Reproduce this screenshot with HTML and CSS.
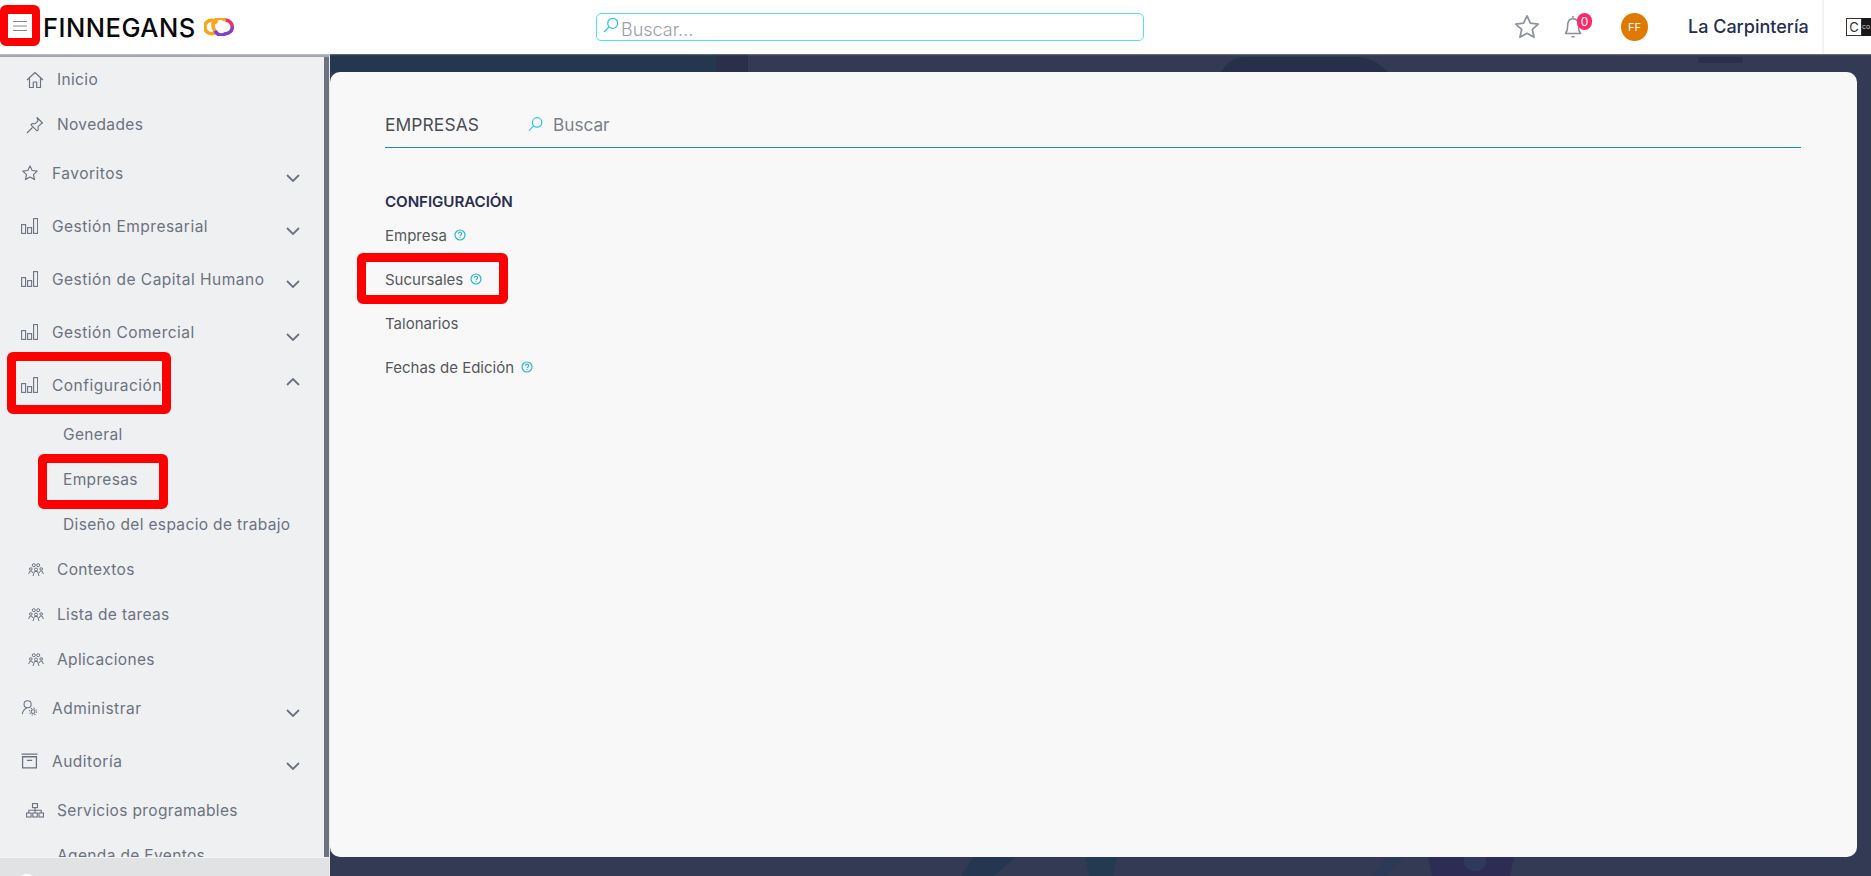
FILE: index.html
```html
<!DOCTYPE html>
<html lang="es">
<head>
<meta charset="utf-8">
<title>Finnegans</title>
<link rel="stylesheet" href="styles.css">
</head>
<body>
<svg width="0" height="0" class="defs">
  <defs>
    <symbol id="bars" viewBox="0 0 17 16"><g fill="none" stroke="currentColor" stroke-width="1.1"><rect x=".6" y="6.6" width="4" height="8.8"/><rect x="6.6" y="9.6" width="4" height="5.8"/><rect x="12.6" y=".6" width="4" height="14.8"/></g></symbol>
    <symbol id="chev" viewBox="0 0 14 8"><path d="M1 1l6 6 6-6" fill="none" stroke="currentColor" stroke-width="1.8"/></symbol>
    <symbol id="star" viewBox="0 0 24 24"><path d="M12 2.5l2.9 6.2 6.7.8-5 4.6 1.4 6.7L12 17.400l-6 3.400 1.400-6.700-5-4.600 6.700-.8z" fill="none" stroke="currentColor" stroke-width="1.500" stroke-linejoin="round"/></symbol>
    <symbol id="people" viewBox="0 0 16 14"><g fill="none" stroke="currentColor" stroke-width="1"><circle cx="5.800" cy="2.200" r="1.500"/><circle cx="10.200" cy="2.200" r="1.500"/><circle cx="2.800" cy="6" r="1.300"/><circle cx="8" cy="6.500" r="1.500"/><circle cx="13.200" cy="6" r="1.300"/><path d="M.6 11l1.400-3h1.600l1 2M5 13l1.400-4.500h3.200L11 13M11 10l1.400-2H14l1.400 3"/></g></symbol>
    <symbol id="help" viewBox="0 0 12 12"><circle cx="6" cy="6" r="5" fill="none" stroke="currentColor" stroke-width="1.200"/><path d="M4.400 4.800a1.600 1.600 0 1 1 2.500 1.300c-.6.300-.9.500-.9 1.100" fill="none" stroke="currentColor" stroke-width="1.100"/><circle cx="6" cy="8.600" r=".7" fill="currentColor"/></symbol>
    <symbol id="search" viewBox="0 0 16 16"><circle cx="9.700" cy="6.300" r="5" fill="none" stroke="currentColor" stroke-width="1.300"/><path d="M6 10L1 15" stroke="currentColor" stroke-width="1.300"/></symbol>
  </defs>
</svg>

<header class="topbar">
  <div class="brand">
    <span class="menu-btn">
      <svg class="burger" viewBox="0 0 14 10"><path d="M0 .5h14M0 5h14M0 9.500h14" stroke="currentColor" stroke-width=".9"/></svg>
    </span>
    <span class="wordmark">FINNEGANS</span>
    <svg class="co-logo" viewBox="0 0 30 18">
      <path d="M13 5.200A6.700 6.700 0 1 0 13 12.800" fill="none" stroke="#f9a51a" stroke-width="3.600"/>
      <path d="M11 12.500A6.700 6.700 0 0 0 21.500 15.700A6.700 6.700 0 0 0 28.300 9" fill="none" stroke="#8140c9" stroke-width="3.600"/>
      <path d="M11 12.500A6.700 6.700 0 0 1 21.500 2.300" fill="none" stroke="#f9a51a" stroke-width="3.600"/>
      <path d="M21.500 2.300A6.700 6.700 0 0 1 28.300 9" fill="none" stroke="#ee2f6a" stroke-width="3.600"/>
    </svg>
  </div>
  <div class="top-search">
    <svg class="top-search-icon"><use href="#search"/></svg>
    <span class="top-search-text">Buscar...</span>
  </div>
  <div class="top-actions">
    <svg class="top-star"><use href="#star"/></svg>
    <span class="bell-wrap">
      <svg class="bell" viewBox="2 1 16 22"><path d="M3 18c1.500-1.500 2-3 2-6.500C5 7 7 4.500 10 4.500s5 2.500 5 7c0 3.500.5 5 2 6.500zM8.500 21h3M10 2v2.500" fill="none" stroke="currentColor" stroke-width="1.400" stroke-linejoin="round"/></svg>
      <span class="badge">0</span>
    </span>
    <span class="avatar">FF</span>
    <span class="company">La Carpintería</span>
    <span class="co-box"><span class="co-box-mark">C</span><span class="co-box-dark">co</span></span>
  </div>
</header>

<div class="workspace">
  <svg class="backdrop" viewBox="0 0 1541 822" preserveAspectRatio="none">
    <rect x="0" y="0" width="386" height="18" fill="#25364f"/>
    <rect x="386" y="0" width="32" height="18" fill="#2a3049"/>
    <path d="M891 18q8-15 25-15h110q17 0 32 15z" fill="#27304a"/>
    <rect x="1368" y="3" width="45" height="6" rx="2" fill="#2a3049"/>
    <path d="M643 803h43l-22 19h-33z" fill="#253750"/>
    <path d="M755 803h32l-4 19h-24z" fill="#243a50"/>
    <path d="M1057 803h16l-16 19h-15z" fill="#2c3a56"/>
    <path d="M1098 803h86l-4 19h-78z" fill="#2c2c55"/>
    <path d="M1134 803h22v6a11 8 0 0 1-22 0z" fill="#2d3a5c"/>
  </svg>
  <nav class="sidebar">
    <div class="side-scroll">
      <a class="item leaf">
        <svg class="leaf-icon" viewBox="0 0 18 18"><path d="M1 9l8-7.500L17 9M3.500 7.500V16.500h3.800v-5.500h3.400v5.500h3.800V7.500" fill="none" stroke="currentColor" stroke-width="1.200" stroke-linejoin="round"/></svg>
        <span>Inicio</span>
      </a>
      <a class="item leaf">
        <svg class="leaf-icon" viewBox="0 0 18 18"><path d="M11 1.500l5.500 5.500-1.500.8-3 3 .2 3-1.200 1-6-6 1-1.200 3 .2 3-3zM6.500 11.500L1 17" fill="none" stroke="currentColor" stroke-width="1.100" stroke-linejoin="round"/></svg>
        <span>Novedades</span>
      </a>
      <a class="item group">
        <svg class="group-icon star-icon"><use href="#star"/></svg>
        <span class="group-label">Favoritos</span>
        <svg class="chev"><use href="#chev"/></svg>
      </a>
      <a class="item group">
        <svg class="group-icon"><use href="#bars"/></svg>
        <span class="group-label">Gestión Empresarial</span>
        <svg class="chev"><use href="#chev"/></svg>
      </a>
      <a class="item group">
        <svg class="group-icon"><use href="#bars"/></svg>
        <span class="group-label">Gestión de Capital Humano</span>
        <svg class="chev"><use href="#chev"/></svg>
      </a>
      <a class="item group">
        <svg class="group-icon"><use href="#bars"/></svg>
        <span class="group-label">Gestión Comercial</span>
        <svg class="chev"><use href="#chev"/></svg>
      </a>
      <a class="item group">
        <svg class="group-icon"><use href="#bars"/></svg>
        <span class="group-label">Configuración</span>
        <svg class="chev chev-up"><use href="#chev"/></svg>
        <span class="mark mark-config"></span>
      </a>
      <a class="item sub">General</a>
      <a class="item sub">Empresas<span class="mark mark-emp"></span></a>
      <a class="item sub">Diseño del espacio de trabajo</a>
      <a class="item leaf">
        <svg class="leaf-icon people"><use href="#people"/></svg>
        <span>Contextos</span>
      </a>
      <a class="item leaf">
        <svg class="leaf-icon people"><use href="#people"/></svg>
        <span>Lista de tareas</span>
      </a>
      <a class="item leaf">
        <svg class="leaf-icon people"><use href="#people"/></svg>
        <span>Aplicaciones</span>
      </a>
      <a class="item group">
        <svg class="group-icon" viewBox="0 0 17 17"><g fill="none" stroke="currentColor" stroke-width="1.100"><circle cx="6.500" cy="4.500" r="3.800"/><path d="M.8 15c.5-3.500 2-5.500 4.700-6.300"/><circle cx="12.300" cy="12.300" r="2"/><circle cx="12.300" cy="12.300" r="3.700" stroke-dasharray="1.400 1.500"/></g></svg>
        <span class="group-label">Administrar</span>
        <svg class="chev"><use href="#chev"/></svg>
      </a>
      <a class="item group">
        <svg class="group-icon" viewBox="0 0 16 15"><path d="M.5 1h15M1.500 3.500h13V14h-13zM5.500 7h5" fill="none" stroke="currentColor" stroke-width="1.200"/></svg>
        <span class="group-label">Auditoría</span>
        <svg class="chev"><use href="#chev"/></svg>
      </a>
      <a class="item leaf">
        <svg class="leaf-icon tree" viewBox="0 0 18 15"><g fill="none" stroke="currentColor" stroke-width="1.100"><rect x="6.500" y=".6" width="5" height="4"/><rect x=".6" y="10" width="4.500" height="4"/><rect x="6.800" y="10" width="4.500" height="4"/><rect x="13" y="10" width="4.500" height="4"/><path d="M9 4.600V10M2.800 10V7.300h12.400V10"/></g></svg>
        <span>Servicios programables</span>
      </a>
      <a class="item leaf">
        <span class="leaf-spacer"></span>
        <span>Agenda de Eventos</span>
      </a>
    </div>
    <div class="side-foot"><span class="foot-circle"></span></div>
  </nav>
  <main class="card">
    <div class="card-head">
      <span class="card-title">EMPRESAS</span>
      <svg class="card-search-icon"><use href="#search"/></svg>
      <span class="card-search">Buscar</span>
    </div>
    <h2 class="section">CONFIGURACIÓN</h2>
    <ul class="links">
      <li class="link">Empresa<svg class="help"><use href="#help"/></svg></li>
      <li class="link">Sucursales<svg class="help"><use href="#help"/></svg><span class="mark mark-suc"></span></li>
      <li class="link">Talonarios</li>
      <li class="link">Fechas de Edición<svg class="help"><use href="#help"/></svg></li>
    </ul>
  </main>
</div>
</body>
</html>
```
FILE: styles.css
```css
* { box-sizing: border-box; }
html, body { margin: 0; height: 100%; overflow: hidden; }
body { width: 1871px; height: 876px; font-family: "Inter", "Noto Sans", sans-serif; background: #333a54; display: flex; flex-direction: column; }
.defs { position: absolute; }

.topbar { height: 54px; flex: none; background: #fff; display: flex; align-items: center; position: relative; z-index: 2; box-shadow: 0 1px 1px rgba(255, 255, 255, .25); }
.brand { width: 596px; flex: none; display: flex; align-items: center; height: 54px; }
.menu-btn { width: 40px; height: 41px; margin-top: -4px; background: #fff; border: 8px solid #fe0000; border-top-width: 9px; border-radius: 6px; display: flex; align-items: center; justify-content: center; color: #777c86; flex: none; }
.burger { width: 14px; height: 10px; flex: none; }
.wordmark { font-size: 25.500px; font-weight: 500; color: #0a0a0a; margin-left: 3px; letter-spacing: .5px; }
.co-logo { width: 30px; height: 18px; margin-left: 8px; }
.top-search { width: 548px; height: 28px; border: 1px solid #4de3f5; border-radius: 5px; display: flex; align-items: flex-start; padding: 3px 0 0 6px; flex: none; }
.top-search-icon { width: 16px; height: 16px; color: #2dc6ea; flex: none; }
.top-search-text { font-size: 18px; font-weight: 300; color: #9aa0a8; margin-left: 2px; line-height: 24px; margin-top: 1px; }
.top-actions { margin-left: auto; display: flex; align-items: center; height: 54px; color: #8b909c; }
.top-star { width: 28px; height: 28px; color: #8d929c; flex: none; }
.bell-wrap { position: relative; width: 18px; height: 24px; margin-left: 23px; flex: none; }
.bell { width: 18px; height: 24px; color: #8b909c; display: block; }
.badge { position: absolute; left: 13px; top: -2px; width: 15px; height: 17px; border-radius: 8px; background: #ff2a68; color: #fff; font-size: 12px; line-height: 17px; text-align: center; }
.avatar { width: 27px; height: 28px; border-radius: 50%; background: #e07900; color: #fff; font-size: 11px; display: flex; align-items: center; justify-content: center; margin-left: 39px; flex: none; }
.company { font-size: 18px; font-weight: 500; color: #252e4e; margin: -2px 0 0 40px; width: 134px; white-space: nowrap; flex: none; }
.co-box { width: 49px; height: 54px; border-left: 2px solid #f3f3f3; display: flex; align-items: center; padding-left: 22px; flex: none; overflow: hidden; }
.co-box-mark { width: 16px; height: 18px; border: 1px solid #333; font-size: 13px; line-height: 16px; text-align: center; color: #333; flex: none; }
.co-box-dark { width: 13px; height: 18px; background: #181818; color: #ccc; font-size: 7px; line-height: 18px; flex: none; }

.workspace { flex: 1; min-height: 0; display: flex; position: relative; }
.backdrop { position: absolute; left: 330px; top: 0; width: 1541px; height: 822px; }

.sidebar { width: 330px; flex: none; background: #eff0f2; border-top: 3px solid #a3a6ae; border-right: 1px solid #e8e9eb; display: flex; flex-direction: column; position: relative; color: #6b7280; z-index: 1; }
.side-scroll { flex: 1; min-height: 0; overflow: hidden; border-right: 5px solid #6b7280; height: 800px; }
.side-foot { height: 19px; flex: none; background: #e1e2e4; border-top: 1px solid #f4f4f5; position: relative; overflow: hidden; }
.foot-circle { position: absolute; left: 17px; top: 16px; width: 20px; height: 20px; border-radius: 50%; background: #fff; }

.item { display: flex; align-items: center; font-size: 15.500px; white-space: nowrap; position: relative; color: #6b7280; letter-spacing: .35px; }
.leaf { height: 45px; padding-left: 26px; }
.leaf-icon { width: 18px; height: 18px; margin-right: 13px; flex: none; }
.people { width: 16px; height: 14px; margin-left: 2px; margin-right: 13px; }
.tree { width: 18px; height: 15px; }
.leaf-spacer { width: 31px; flex: none; }
.group { height: 53px; padding-left: 21px; }
.group-icon { width: 17px; height: 16px; margin-right: 14px; flex: none; margin-top: -1px; }
.star-icon { width: 18px; height: 18px; margin-right: 13px; }
.group-label { flex: none; letter-spacing: .5px; }
.chev { width: 14px; height: 8px; position: absolute; left: 286px; top: 27px; }
.chev-up { transform: rotate(180deg); top: 19px; }
.sub { height: 45px; padding-left: 63px; }

.card { width: 1527px; height: 785px; margin-top: 18px; background: #f8f8f8; border-radius: 10px; padding: 29px 56px 0 55px; color: #555a60; position: relative; z-index: 1; flex: none; }
.card-head { height: 47px; display: flex; align-items: center; border-bottom: 1px solid #1f8ea6; }
.card-title { font-size: 17.400px; color: #4a4e54; width: 143px; flex: none; letter-spacing: .1px; }
.card-search-icon { width: 15px; height: 16px; color: #2dc6ea; flex: none; margin-right: 10px; }
.card-search { font-size: 17.200px; color: #7a808a; }
.section { font-size: 15.200px; font-weight: 600; color: #2a2f52; margin: 44px 0 0; line-height: 20px; letter-spacing: -.1px; }
.links { list-style: none; margin: 1px 0 0; padding: 0; }
.link { height: 44px; display: flex; align-items: center; font-size: 15px; color: #55595f; position: relative; }
.help { width: 12px; height: 12px; color: #2fb5d2; margin-left: 7px; flex: none; }

.mark { position: absolute; border: 9px solid #fe0000; border-radius: 6px; pointer-events: none; }
.mark-config { left: 7px; top: -7px; width: 164px; height: 62px; z-index: 2; }
.mark-emp { left: 38px; top: -3px; width: 130px; height: 55px; }
.mark-suc { left: -28px; top: -4px; width: 151px; height: 51px; }
```
